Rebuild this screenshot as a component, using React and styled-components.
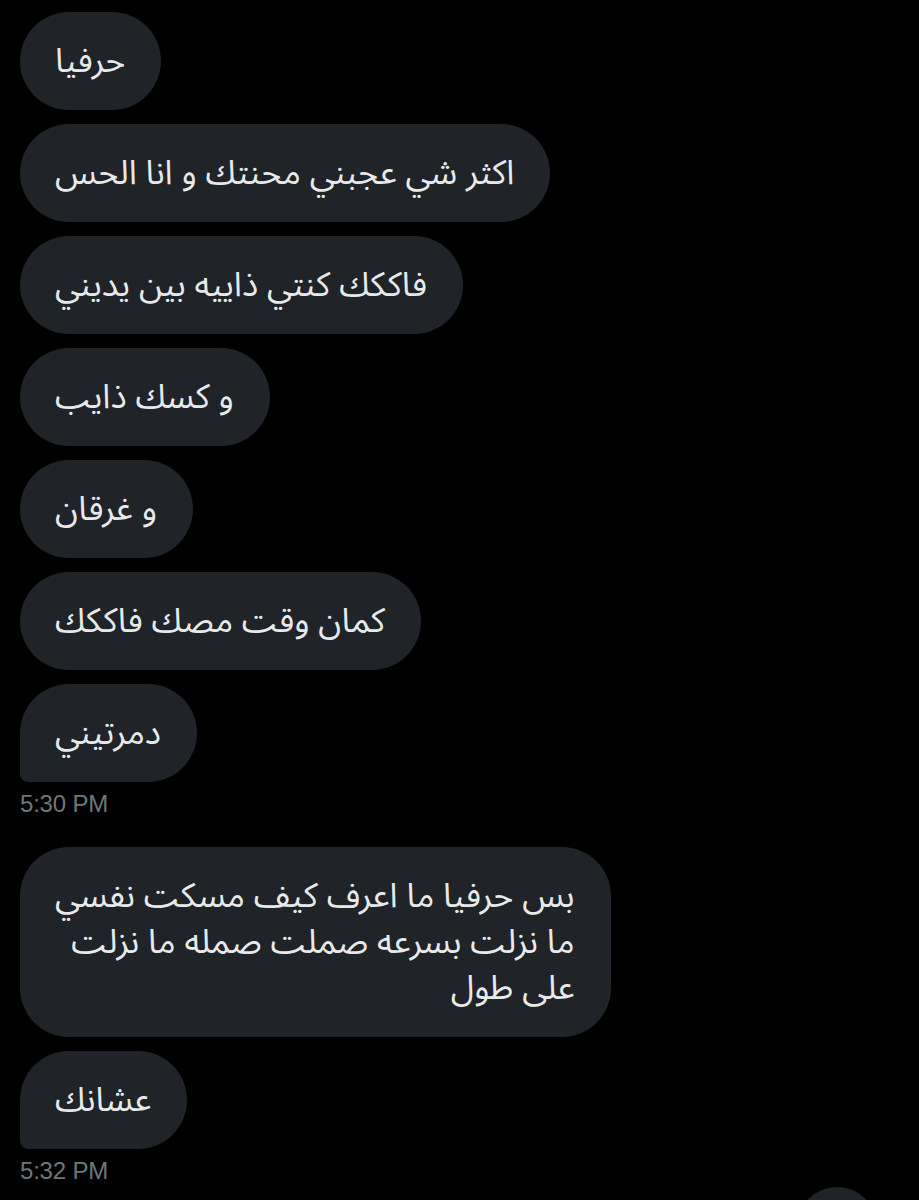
import React from 'react';
import styled, { createGlobalStyle } from 'styled-components';

const GlobalStyle = createGlobalStyle`
  html, body {
    margin: 0;
    padding: 0;
    background: #000;
  }
  body {
    font-family: "Noto Sans Arabic", "DejaVu Sans", sans-serif;
  }
`;

const Screen = styled.div`
  width: 919px;
  height: 1200px;
  overflow: hidden;
  position: relative;
  background: #000;
  box-sizing: border-box;
  padding: 12px 20px 0;
`;

const Group = styled.div`
  display: flex;
  flex-direction: column;
  align-items: flex-start;
  gap: 14px;
  margin-bottom: ${(p) => p.$space}px;
`;

const Bubble = styled.div`
  background: #202327;
  color: #e7e9ea;
  border-radius: 49px;
  border-bottom-left-radius: ${(p) => (p.$last ? '8px' : '49px')};
  padding: 26px 36px 26px 35px;
  font-size: 34px;
  line-height: 46px;
  direction: rtl;
  text-align: right;
  white-space: nowrap;
`;

const Line = styled.div`
  height: 46px;
  line-height: 46px;
`;

const Stamp = styled.div`
  font-family: "Liberation Sans", Arial, sans-serif;
  color: #71767b;
  font-size: 24px;
  line-height: 26px;
  margin-top: -5px;
  letter-spacing: -0.2px;
`;

const ScrollButton = styled.div`
  position: absolute;
  left: 797px;
  top: 1187px;
  width: 80px;
  height: 80px;
  border-radius: 50%;
  background: #202327;
`;

const groups = [
  {
    time: '5:30 PM',
    space: 30,
    messages: [
      ['حرفيا'],
      ['اكثر شي عجبني محنتك و انا الحس'],
      ['فاككك كنتي ذاييه بين يديني'],
      ['و كسك ذايب'],
      ['و غرقان'],
      ['كمان وقت مصك فاككك'],
      ['دمرتيني'],
    ],
  },
  {
    time: '5:32 PM',
    space: 0,
    messages: [
      ['بس حرفيا ما اعرف كيف مسكت نفسي', 'ما نزلت بسرعه صملت صمله ما نزلت', 'على طول'],
      ['عشانك'],
    ],
  },
];

export default function App() {
  return (
    <>
      <GlobalStyle />
      <Screen>
        {groups.map((g) => (
          <Group key={g.time} $space={g.space}>
            {g.messages.map((lines, i) => (
              <Bubble key={i} $last={i === g.messages.length - 1}>
                {lines.map((line, j) => (
                  <Line key={j}>{line}</Line>
                ))}
              </Bubble>
            ))}
            <Stamp>{g.time}</Stamp>
          </Group>
        ))}
        <ScrollButton />
      </Screen>
    </>
  );
}
